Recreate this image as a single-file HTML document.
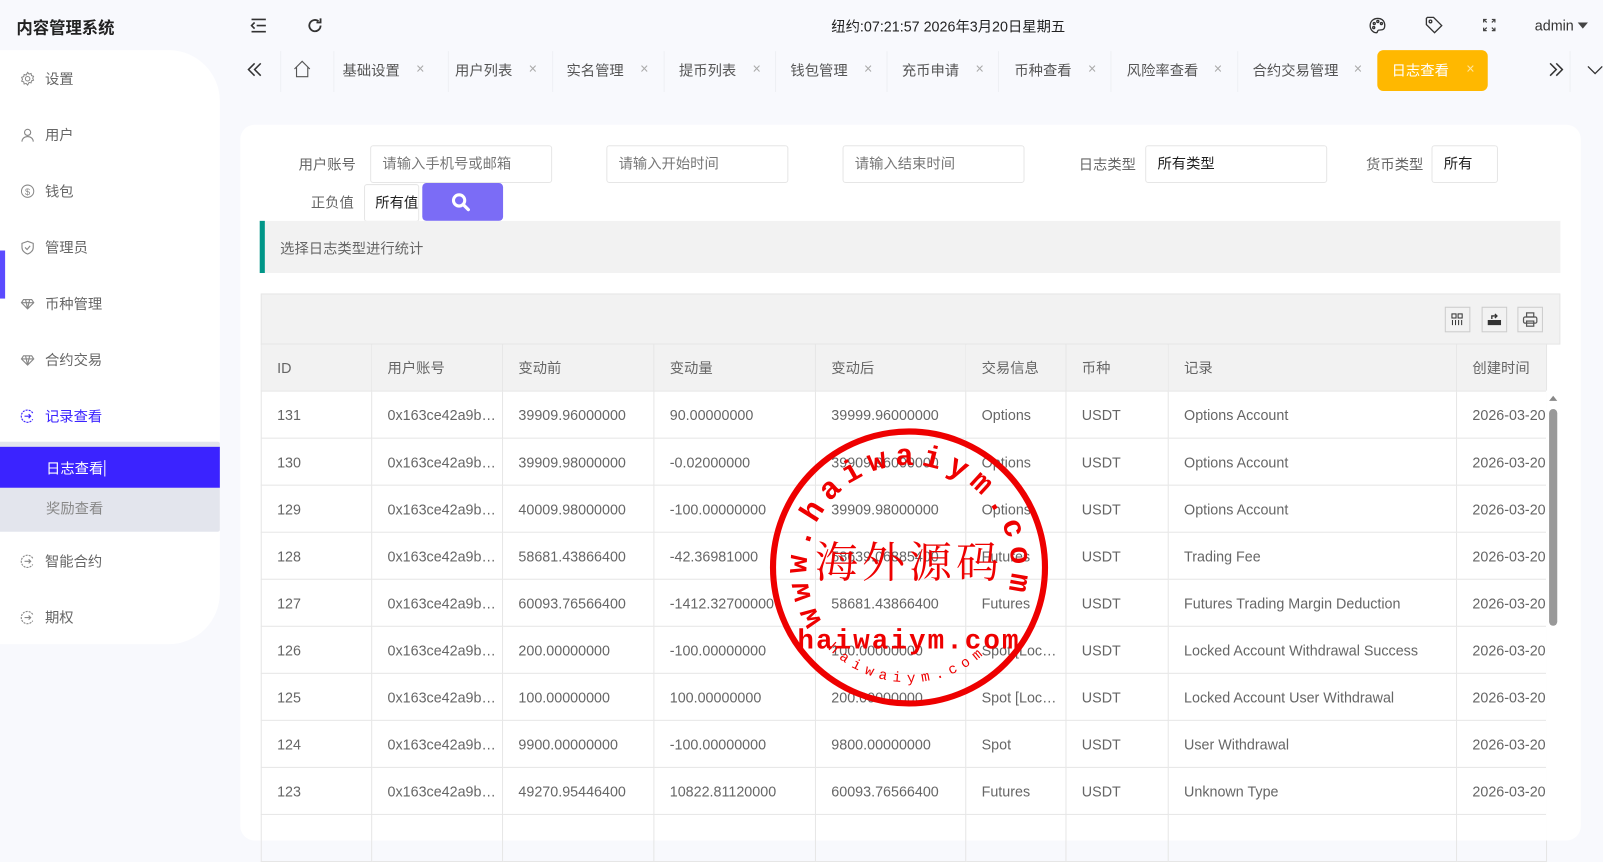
<!DOCTYPE html>
<html><head><meta charset="utf-8"><style>
*{margin:0;padding:0;box-sizing:border-box}
body{width:1603px;height:820px;overflow:hidden;background:#f8f9fd;font-family:"Liberation Sans","Noto Sans CJK SC",sans-serif;font-size:14px;color:#333;position:relative}
#w{position:absolute;left:0;top:0;width:1568px;height:802px;transform:scale(1.0225);transform-origin:0 0}
.a{position:absolute;white-space:nowrap}
.side{position:absolute;left:0;top:49px;width:215px;height:581px;background:#fff;border-radius:0 50px 50px 0}
.mi{position:absolute;left:20px;color:#666;font-size:14px;display:flex;align-items:center}
.mi svg{margin-right:10px}
.tab{position:absolute;top:59px;font-size:14px;color:#555}
.x{position:absolute;top:59px;color:#aaa;font-size:14px}
.sep{position:absolute;top:50px;width:1px;height:40px;background:#eef0f4}
.card{position:absolute;left:235px;top:122px;width:1311px;height:700px;background:#fff;border-radius:14px}
.inp{position:absolute;height:37px;border:1px solid #e6e6e6;border-radius:3px;background:#fff;padding-left:11px;line-height:35px;color:#777;font-size:14px}
.lbl{position:absolute;color:#666;font-size:14px}
table{position:absolute;left:255px;top:336px;border-collapse:collapse;table-layout:fixed;width:1257px}
td,th{border:1px solid #e6e6e6;height:46px;padding-left:15px;text-align:left;font-weight:normal;color:#666;font-size:14px;white-space:nowrap;overflow:hidden}
th{background:#f2f2f2}
.tb{position:absolute;top:300px;width:25px;height:25px;border:1px solid #ccc;background:#f2f2f2}
</style></head><body><div id="w">
<div class="a" style="left:16px;top:14px;font-size:16px;font-weight:bold;color:#222">内容管理系统</div>
<svg class="a" style="left:245px;top:17px" width="16" height="16" viewBox="0 0 16 16" fill="none" stroke="#333" stroke-width="1.6"><path d="M1 2h14M6 8h9M1 14h14M4 5L1 8l3 3"/></svg>
<svg class="a" style="left:300px;top:17px" width="16" height="16" viewBox="0 0 16 16" fill="none" stroke="#333" stroke-width="1.8"><path d="M13.5 8A5.5 5.5 0 1 1 11.5 3.8"/><path d="M13.5 1v4h-4"/></svg>
<div class="a" style="left:813px;top:16px;font-size:14px;color:#222">纽约:07:21:57 2026年3月20日星期五</div>
<svg class="a" style="left:1339px;top:17px" width="17" height="16" viewBox="0 0 17 16" fill="none" stroke="#333" stroke-width="1.3"><path d="M8.5 1C4 1 1 4 1 8s3 7 6 7c1.5 0 1-2 2-2.5s4 .5 5.5-1.5S16 1 8.5 1z"/><circle cx="5" cy="6" r="1"/><circle cx="8.5" cy="4" r="1"/><circle cx="12" cy="6" r="1"/><circle cx="4.5" cy="10" r="1"/></svg>
<svg class="a" style="left:1394px;top:16px" width="17" height="17" viewBox="0 0 17 17" fill="none" stroke="#333" stroke-width="1.3"><path d="M1 2v6l8 8 7-7-8-8H2z"/><circle cx="5" cy="5" r="1.3"/></svg>
<svg class="a" style="left:1450px;top:18px" width="13" height="13" viewBox="0 0 13 13" fill="none" stroke="#444" stroke-width="1.2"><path d="M1 4V1h3M1 1l3 3M12 4V1H9M12 1L9 4M1 9v3h3M1 12l3-3M12 9v3H9M12 12L9 9"/></svg>
<div class="a" style="left:1501px;top:16px;font-size:14px;color:#333;display:flex;align-items:center">admin<span style="margin-left:4px;border:5px solid transparent;border-top:6px solid #444;margin-top:6px"></span></div>

<div class="side"></div>
<div class="a" style="left:0;top:245px;width:5px;height:47px;background:#5b4bff"></div>
<div class="mi" style="top:67px"><svg width="14" height="14" viewBox="0 0 14 14" fill="none" stroke="#888" stroke-width="1"><circle cx="7" cy="7" r="2.2"/><path d="M7 .8l1.4 1.6 2-.5.4 2 2 .7-.8 1.9.8 1.9-2 .7-.4 2-2-.5L7 13.2l-1.4-1.6-2 .5-.4-2-2-.7.8-1.9-.8-1.9 2-.7.4-2 2 .5z"/></svg>设置</div>
<div class="mi" style="top:122px"><svg width="14" height="14" viewBox="0 0 14 14" fill="none" stroke="#888" stroke-width="1.1"><circle cx="7" cy="4.5" r="3"/><path d="M1.5 13.5c0-3 2.5-5 5.5-5s5.5 2 5.5 5"/></svg>用户</div>
<div class="mi" style="top:177px"><svg width="14" height="14" viewBox="0 0 14 14" fill="none" stroke="#888" stroke-width="1"><circle cx="7" cy="7" r="6"/><text x="7" y="10.5" font-size="9" text-anchor="middle" fill="#888" stroke="none">$</text></svg>钱包</div>
<div class="mi" style="top:232px"><svg width="14" height="14" viewBox="0 0 14 14" fill="none" stroke="#888" stroke-width="1.1"><path d="M7 1l5.5 2v4c0 3-2.5 5.5-5.5 6.5C4 12.5 1.5 10 1.5 7V3z"/><path d="M4.5 7l2 2 3-3.5"/></svg>管理员</div>
<div class="mi" style="top:287px"><svg width="14" height="14" viewBox="0 0 14 14" fill="none" stroke="#888" stroke-width="1.1"><path d="M3 3h8l2 3-6 6-6-6zM1 6h12M5 3l2 9 2-9"/></svg>币种管理</div>
<div class="mi" style="top:342px"><svg width="14" height="14" viewBox="0 0 14 14" fill="none" stroke="#888" stroke-width="1.1"><path d="M3 3h8l2 3-6 6-6-6zM1 6h12M5 3l2 9 2-9"/></svg>合约交易</div>
<div class="mi" style="top:397px;color:#3b23ff"><svg width="14" height="14" viewBox="0 0 14 14" fill="none" stroke="#3b23ff" stroke-width="1.1"><path d="M12 4A6 6 0 1 0 12 10" stroke-dasharray="2 1"/><path d="M4 7h6M8 5l2 2-2 2"/></svg>记录查看</div>
<div class="a" style="left:0;top:432px;width:215px;height:88px;background:#e3e5ed;border-radius:0 2px 2px 0"></div>
<div class="a" style="left:0;top:437px;width:215px;height:40px;background:#3b23ff"></div>
<div class="a" style="left:45px;top:448px;color:#fff;font-size:14px">日志查看<span style="border-left:1px solid #fff;margin-left:1px"></span></div>
<div class="a" style="left:45px;top:487px;color:#888;font-size:14px">奖励查看</div>
<div class="mi" style="top:539px"><svg width="14" height="14" viewBox="0 0 14 14" fill="none" stroke="#888" stroke-width="1.1"><path d="M12 4A6 6 0 1 0 12 10" stroke-dasharray="2 1"/><path d="M4 7h6M8 5l2 2-2 2"/></svg>智能合约</div>
<div class="mi" style="top:594px"><svg width="14" height="14" viewBox="0 0 14 14" fill="none" stroke="#888" stroke-width="1.1"><path d="M12 4A6 6 0 1 0 12 10" stroke-dasharray="2 1"/><path d="M4 7h6M8 5l2 2-2 2"/></svg>期权</div>

<svg class="a" style="left:242px;top:61px" width="15" height="14" viewBox="0 0 15 14" fill="none" stroke="#333" stroke-width="1.5"><path d="M7 1L1 7l6 6M13 1L7 7l6 6"/></svg>
<div class="sep" style="left:274px"></div>
<svg class="a" style="left:287px;top:59px" width="17" height="17" viewBox="0 0 17 17" fill="none" stroke="#555" stroke-width="1.1"><path d="M1 8.5L8.5 1 16 8.5M3 6.5V16h11V6.5"/></svg>
<div class="sep" style="left:326px"></div>
<div class="tab" style="left:335px">基础设置</div><div class="x" style="left:407px">×</div><div class="sep" style="left:438px"></div>
<div class="tab" style="left:445px">用户列表</div><div class="x" style="left:517px">×</div><div class="sep" style="left:540px"></div>
<div class="tab" style="left:554px">实名管理</div><div class="x" style="left:626px">×</div><div class="sep" style="left:649px"></div>
<div class="tab" style="left:664px">提币列表</div><div class="x" style="left:736px">×</div><div class="sep" style="left:758px"></div>
<div class="tab" style="left:773px">钱包管理</div><div class="x" style="left:845px">×</div><div class="sep" style="left:867px"></div>
<div class="tab" style="left:882px">充币申请</div><div class="x" style="left:954px">×</div><div class="sep" style="left:976px"></div>
<div class="tab" style="left:992px">币种查看</div><div class="x" style="left:1064px">×</div><div class="sep" style="left:1086px"></div>
<div class="tab" style="left:1102px">风险率查看</div><div class="x" style="left:1187px">×</div><div class="sep" style="left:1210px"></div>
<div class="tab" style="left:1225px">合约交易管理</div><div class="x" style="left:1324px">×</div>
<div class="a" style="left:1347px;top:49px;width:108px;height:40px;background:#ffb800;border-radius:6px"></div>
<div class="tab" style="left:1361px;color:#fff">日志查看</div><div class="x" style="left:1434px;color:#ffe5a0">×</div>
<div class="sep" style="left:1535px"></div><div class="sep" style="left:1575px"></div>
<svg class="a" style="left:1514px;top:61px" width="15" height="14" viewBox="0 0 15 14" fill="none" stroke="#333" stroke-width="1.5"><path d="M2 1l6 6-6 6M8 1l6 6-6 6"/></svg>
<svg class="a" style="left:1552px;top:64px" width="16" height="9" viewBox="0 0 16 9" fill="none" stroke="#333" stroke-width="1.3"><path d="M1 1l7 7 7-7"/></svg>

<div class="card"></div>
<div class="lbl" style="left:292px;top:151px">用户账号</div>
<div class="inp" style="left:362px;top:142px;width:178px">请输入手机号或邮箱</div>
<div class="inp" style="left:593px;top:142px;width:178px">请输入开始时间</div>
<div class="inp" style="left:824px;top:142px;width:178px">请输入结束时间</div>
<div class="lbl" style="left:1055px;top:151px">日志类型</div>
<div class="inp" style="left:1120px;top:142px;width:178px;color:#222">所有类型</div>
<div class="lbl" style="left:1336px;top:151px">货币类型</div>
<div class="inp" style="left:1400px;top:142px;width:65px;color:#222">所有</div>
<div class="lbl" style="left:304px;top:188px">正负值</div>
<div class="inp" style="left:356px;top:180px;width:54px;padding-left:10px;color:#222;overflow:hidden">所有值</div>
<div class="a" style="left:413px;top:179px;width:79px;height:37px;background:#7b6cf6;border-radius:4px"></div>
<svg class="a" style="left:441px;top:188px" width="19" height="19" viewBox="0 0 19 19"><circle cx="8" cy="8" r="5.5" fill="none" stroke="#fff" stroke-width="3"/><path d="M12 12l5 5" stroke="#fff" stroke-width="3.2" stroke-linecap="round"/></svg>
<div class="a" style="left:254px;top:216px;width:1272px;height:51px;background:#f2f2f2;border-left:5px solid #009688"></div>
<div class="a" style="left:274px;top:233px;color:#666;font-size:14px">选择日志类型进行统计</div>

<div class="a" style="left:255px;top:287px;width:1271px;height:50px;background:#f2f2f2;border:1px solid #e6e6e6"></div>
<div class="tb" style="left:1413px"><svg width="23" height="23" viewBox="0 0 23 23" fill="none" stroke="#333" stroke-width="1"><rect x="6" y="6" width="4" height="4"/><rect x="12" y="6" width="4" height="4"/><path d="M6.5 12v5M9.5 12v5M12.5 12v5M15.5 12v5"/></svg></div>
<div class="tb" style="left:1449px"><svg width="23" height="23" viewBox="0 0 23 23"><path d="M5 12h13v5H5z" fill="#333"/><path d="M9 11V8h5M12 6l2 2-2 2" fill="none" stroke="#333" stroke-width="1.3"/></svg></div>
<div class="tb" style="left:1484px"><svg width="23" height="23" viewBox="0 0 23 23" fill="none" stroke="#555" stroke-width="1.2"><rect x="8" y="5" width="7" height="4"/><rect x="5" y="9" width="13" height="6" rx="1.5"/><rect x="8" y="13" width="7" height="5"/></svg></div>

<table>
<colgroup><col style="width:108px"><col style="width:128px"><col style="width:148px"><col style="width:158px"><col style="width:147px"><col style="width:98px"><col style="width:100px"><col style="width:282px"><col style="width:88px"></colgroup>
<tr><th>ID</th><th>用户账号</th><th>变动前</th><th>变动量</th><th>变动后</th><th>交易信息</th><th>币种</th><th>记录</th><th>创建时间</th></tr>
<tr><td>131</td><td>0x163ce42a9b…</td><td>39909.96000000</td><td>90.00000000</td><td>39999.96000000</td><td>Options</td><td>USDT</td><td>Options Account</td><td>2026-03-20</td></tr>
<tr><td>130</td><td>0x163ce42a9b…</td><td>39909.98000000</td><td>-0.02000000</td><td>39909.96000000</td><td>Options</td><td>USDT</td><td>Options Account</td><td>2026-03-20</td></tr>
<tr><td>129</td><td>0x163ce42a9b…</td><td>40009.98000000</td><td>-100.00000000</td><td>39909.98000000</td><td>Options</td><td>USDT</td><td>Options Account</td><td>2026-03-20</td></tr>
<tr><td>128</td><td>0x163ce42a9b…</td><td>58681.43866400</td><td>-42.36981000</td><td>58639.06885400</td><td>Futures</td><td>USDT</td><td>Trading Fee</td><td>2026-03-20</td></tr>
<tr><td>127</td><td>0x163ce42a9b…</td><td>60093.76566400</td><td>-1412.32700000</td><td>58681.43866400</td><td>Futures</td><td>USDT</td><td>Futures Trading Margin Deduction</td><td>2026-03-20</td></tr>
<tr><td>126</td><td>0x163ce42a9b…</td><td>200.00000000</td><td>-100.00000000</td><td>100.00000000</td><td>Spot [Loc…</td><td>USDT</td><td>Locked Account Withdrawal Success</td><td>2026-03-20</td></tr>
<tr><td>125</td><td>0x163ce42a9b…</td><td>100.00000000</td><td>100.00000000</td><td>200.00000000</td><td>Spot [Loc…</td><td>USDT</td><td>Locked Account User Withdrawal</td><td>2026-03-20</td></tr>
<tr><td>124</td><td>0x163ce42a9b…</td><td>9900.00000000</td><td>-100.00000000</td><td>9800.00000000</td><td>Spot</td><td>USDT</td><td>User Withdrawal</td><td>2026-03-20</td></tr>
<tr><td>123</td><td>0x163ce42a9b…</td><td>49270.95446400</td><td>10822.81120000</td><td>60093.76566400</td><td>Futures</td><td>USDT</td><td>Unknown Type</td><td>2026-03-20</td></tr>
<tr><td></td><td></td><td></td><td></td><td></td><td></td><td></td><td></td><td></td></tr>
</table>
<div class="a" style="left:1512px;top:382px;width:14px;height:440px;background:#fff"></div>
<div class="a" style="left:1515px;top:387px;border:4px solid transparent;border-bottom:5px solid #888;border-top:0"></div>
<div class="a" style="left:1515px;top:400px;width:8px;height:212px;background:#999;border-radius:4px"></div>

<svg class="a" style="left:744px;top:412px" width="290" height="290" viewBox="0 0 290 290">
<defs><path id="c1" d="M63 200 A100 100 0 1 1 227 200"/><path id="c2" d="M59 215 A112 112 0 0 0 231 215"/></defs>
<circle cx="145" cy="143" r="133" fill="none" stroke="#e00" stroke-width="6"/>
<text fill="#e00" font-size="30" font-weight="bold" font-family="Liberation Mono,monospace" letter-spacing="7"><textPath href="#c1" startOffset="1%">www.haiwaiym.com</textPath></text>
<text x="145" y="153" fill="#e00" font-size="42" text-anchor="middle" font-family="Noto Serif CJK SC,serif" letter-spacing="4">海外源码</text>
<text x="145" y="222" fill="#e00" font-size="27" font-weight="bold" text-anchor="middle" font-family="Liberation Mono,monospace" letter-spacing="2">haiwaiym.com</text>
<text fill="#e00" font-size="14" font-family="Liberation Mono,monospace" letter-spacing="6"><textPath href="#c2" startOffset="5%">haiwaiym.com</textPath></text>
</svg>
</div></body></html>
